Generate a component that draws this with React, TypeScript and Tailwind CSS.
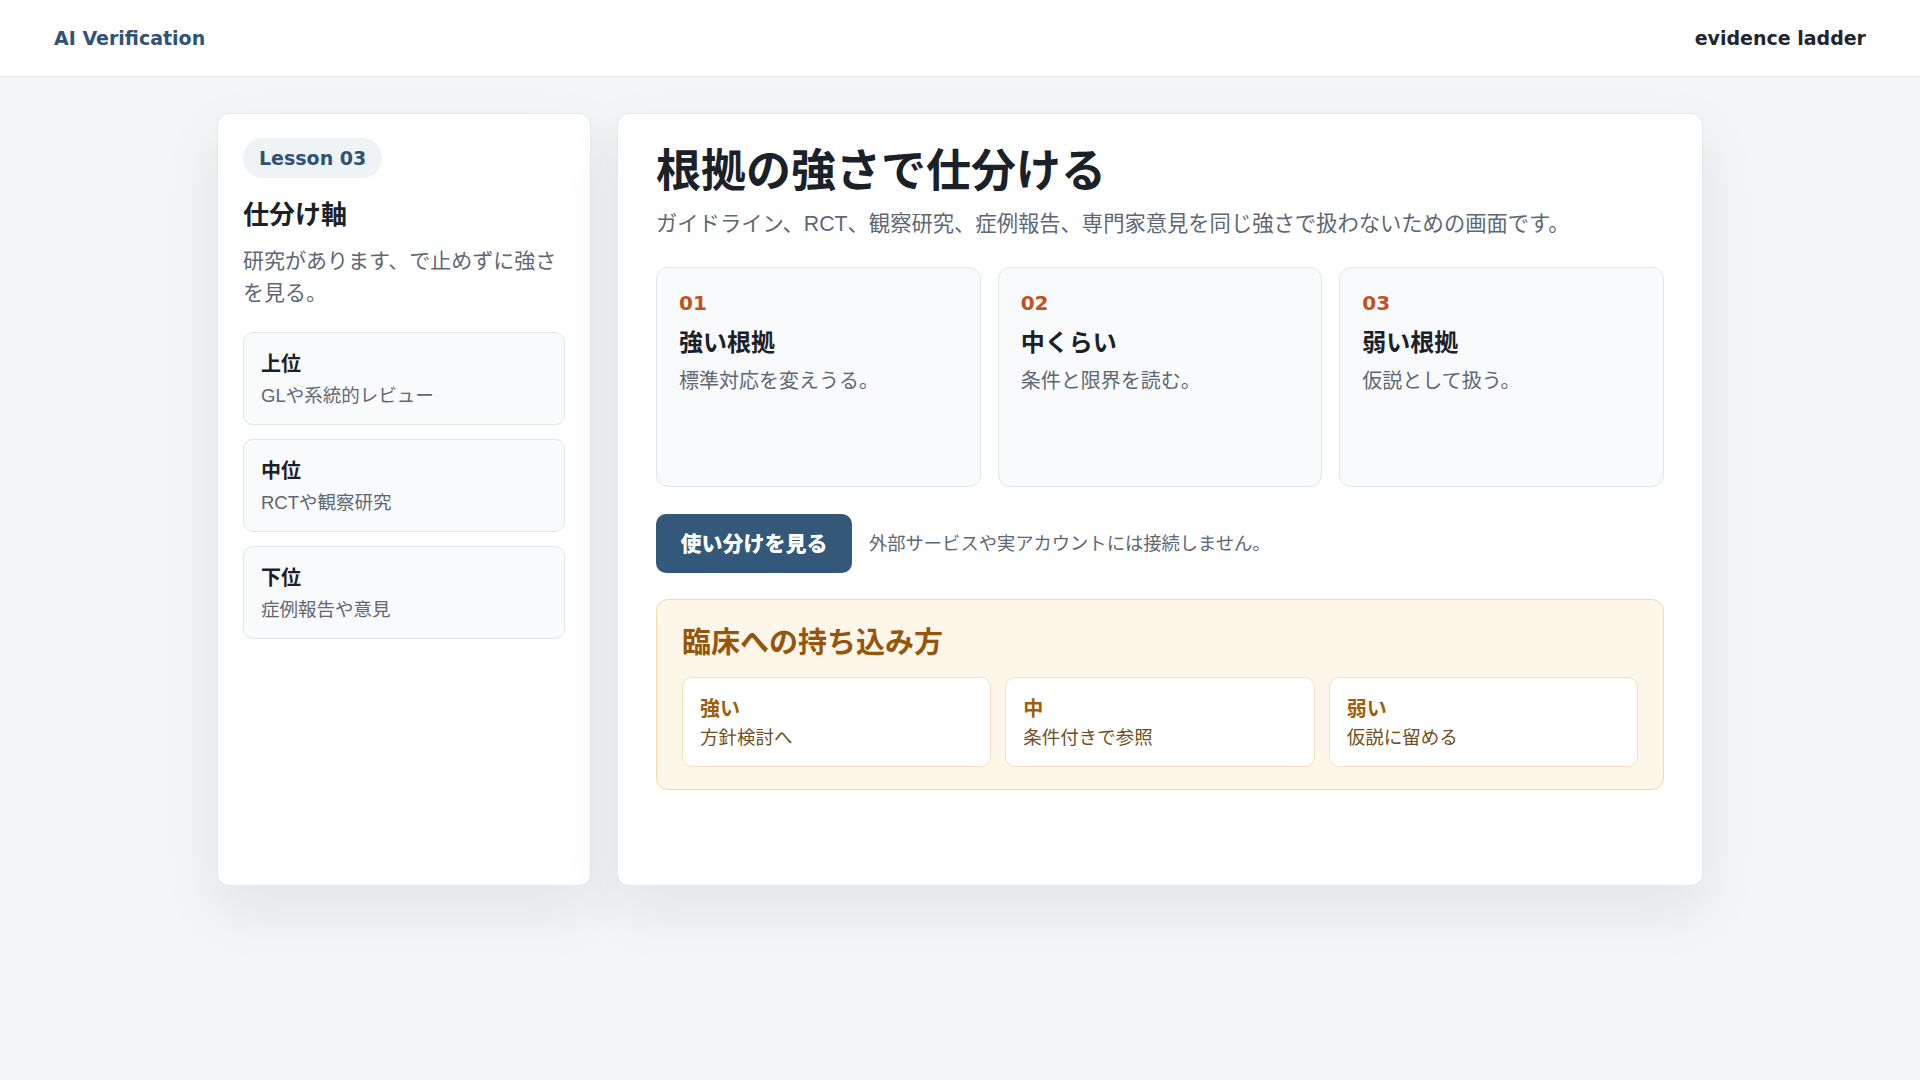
const levels = [
  { title: '上位', desc: 'GLや系統的レビュー' },
  { title: '中位', desc: 'RCTや観察研究' },
  { title: '下位', desc: '症例報告や意見' },
];

const grades = [
  { no: '01', title: '強い根拠', desc: '標準対応を変えうる。' },
  { no: '02', title: '中くらい', desc: '条件と限界を読む。' },
  { no: '03', title: '弱い根拠', desc: '仮説として扱う。' },
];

const usage = [
  { title: '強い', desc: '方針検討へ' },
  { title: '中', desc: '条件付きで参照' },
  { title: '弱い', desc: '仮説に留める' },
];

const wideLatin = "font-['DejaVu_Sans','Noto_Sans_CJK_JP',sans-serif]";

export default function App() {
  return (
    <div className="min-h-screen bg-[#f3f5f6] font-['Liberation_Sans','Noto_Sans_CJK_JP',sans-serif] text-[#1f262e]">
      <header className="flex h-[77px] items-center justify-between border-b border-[#e2e6e9] bg-white px-[54px]">
        <span className={`${wideLatin} text-[19px] font-bold text-[#2f5275]`}>AI Verification</span>
        <span className={`${wideLatin} text-[19px] font-bold text-[#1f262e]`}>evidence ladder</span>
      </header>

      <main className="flex justify-center gap-[26px] pt-[36px]">
        <aside className="h-[773px] w-[374px] rounded-[12px] border border-[#e4e8eb] bg-white px-[25px] pt-[24px] shadow-[0_24px_60px_rgba(30,45,60,0.08)]">
          <span
            className={`${wideLatin} inline-flex h-[40px] items-center rounded-full bg-[#eef3f5] px-[16px] text-[19px] font-bold text-[#2f5275]`}
          >
            Lesson 03
          </span>
          <h2 className="mt-[20px] text-[26px] font-bold leading-[34px] text-[#1b2128]">仕分け軸</h2>
          <p className="mt-[13px] text-[21px] leading-[32px] text-[#5d6873]">
            研究があります、で止めずに強さを見る。
          </p>
          <div className="mt-[23px] flex flex-col gap-[14px]">
            {levels.map((l) => (
              <div
                key={l.title}
                className="h-[93px] rounded-[10px] border border-[#e2e6ea] bg-[#f9fafb] px-[17px] pt-[18px]"
              >
                <div className="text-[20px] font-bold leading-[26px] text-[#1b2128]">{l.title}</div>
                <div className="mt-[6px] text-[18.5px] leading-[26px] text-[#5d6873]">{l.desc}</div>
              </div>
            ))}
          </div>
        </aside>

        <section className="h-[773px] w-[1086px] rounded-[12px] border border-[#e4e8eb] bg-white px-[38px] pt-[31px] shadow-[0_24px_60px_rgba(30,45,60,0.08)]">
          <h1 className="text-[45px] font-bold leading-[54px] text-[#1b2128]">根拠の強さで仕分ける</h1>
          <p className="mt-[9px] text-[21.3px] leading-[32px] text-[#5d6873]">
            ガイドライン、RCT、観察研究、症例報告、専門家意見を同じ強さで扱わないための画面です。
          </p>

          <div className="mt-[27px] grid grid-cols-3 gap-[17px]">
            {grades.map((g) => (
              <div
                key={g.no}
                className="h-[220px] rounded-[12px] border border-[#e2e6ea] bg-[#f8fafb] px-[22px] pt-[21px]"
              >
                <div className={`${wideLatin} text-[20px] font-bold leading-[28px] text-[#c2521d]`}>{g.no}</div>
                <div className="mt-[9px] text-[24px] font-bold leading-[34px] text-[#1b2128]">{g.title}</div>
                <div className="mt-[5px] text-[20px] leading-[32px] text-[#5d6873]">{g.desc}</div>
              </div>
            ))}
          </div>

          <div className="mt-[27px] flex items-center gap-[17px]">
            <button
              type="button"
              className="h-[59px] w-[196px] rounded-[10px] bg-[#335879] text-[21px] font-black text-white"
            >
              使い分けを見る
            </button>
            <span className="text-[18.3px] text-[#5d6873]">外部サービスや実アカウントには接続しません。</span>
          </div>

          <div className="mt-[26px] rounded-[12px] border border-[#f3d9a8] bg-[#fef6e9] px-[25px] pb-[22px] pt-[24px]">
            <h3 className="text-[29px] font-bold leading-[38px] text-[#95560c]">臨床への持ち込み方</h3>
            <div className="mt-[15px] grid grid-cols-3 gap-[14px]">
              {usage.map((u) => (
                <div
                  key={u.title}
                  className="h-[90px] rounded-[10px] border border-[#f2dfbd] bg-white px-[17px] pt-[18px]"
                >
                  <div className="text-[20px] font-bold leading-[26px] text-[#9e5f0d]">{u.title}</div>
                  <div className="mt-[3px] text-[18.5px] leading-[26px] text-[#6f4f22]">{u.desc}</div>
                </div>
              ))}
            </div>
          </div>
        </section>
      </main>
    </div>
  );
}
